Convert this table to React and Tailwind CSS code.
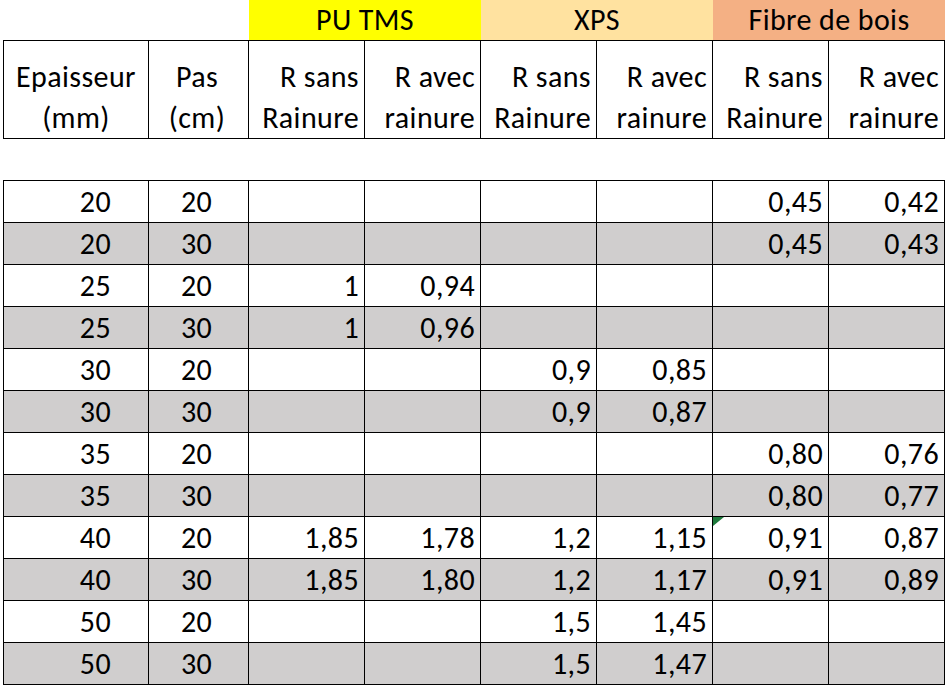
import React from "react";

const rows = [
  ["20", "20", "", "", "", "", "0,45", "0,42"],
  ["20", "30", "", "", "", "", "0,45", "0,43"],
  ["25", "20", "1", "0,94", "", "", "", ""],
  ["25", "30", "1", "0,96", "", "", "", ""],
  ["30", "20", "", "", "0,9", "0,85", "", ""],
  ["30", "30", "", "", "0,9", "0,87", "", ""],
  ["35", "20", "", "", "", "", "0,80", "0,76"],
  ["35", "30", "", "", "", "", "0,80", "0,77"],
  ["40", "20", "1,85", "1,78", "1,2", "1,15", "0,91", "0,87"],
  ["40", "30", "1,85", "1,80", "1,2", "1,17", "0,91", "0,89"],
  ["50", "20", "", "", "1,5", "1,45", "", ""],
  ["50", "30", "", "", "1,5", "1,47", "", ""],
];

const cols = "grid grid-cols-[145px_100px_116px_116px_116px_116px_116px_116px]";

const heads = [
  ["R sans", "Rainure"],
  ["R avec", "rainure"],
  ["R sans", "Rainure"],
  ["R avec", "rainure"],
  ["R sans", "Rainure"],
  ["R avec", "rainure"],
];

export default function App() {
  return (
    <div
      className="w-[949px] h-[685px] bg-white text-black overflow-hidden text-[30px] tracking-[0.4px]"
      style={{ fontFamily: "Carlito, Lato, 'Open Sans', sans-serif" }}
    >
      <div className="ml-[3px] w-[942px]">
        {/* group header */}
        <div className={`${cols} h-[40px] pl-[1px]`}>
          <div className="col-span-2" />
          <div className="col-span-2 bg-[#ffff00] flex items-center justify-center leading-none">PU TMS</div>
          <div className="col-span-2 bg-[#ffe2a0] flex items-center justify-center leading-none">XPS</div>
          <div className="col-span-2 bg-[#f4b084] flex items-center justify-center leading-none">Fibre de bois</div>
        </div>
        {/* column header */}
        <div className={`${cols} border-l border-t border-black`}>
          <div className="h-[98px] border-r border-b border-black flex flex-col justify-end items-center leading-[41px]">
            <span>Epaisseur</span>
            <span>(mm)</span>
          </div>
          <div className="h-[98px] border-r border-b border-black flex flex-col justify-end items-center leading-[41px] pr-[3px]">
            <span>Pas</span>
            <span>(cm)</span>
          </div>
          {heads.map((h, i) => (
            <div
              key={i}
              className="h-[98px] border-r border-b border-black flex flex-col justify-end items-end pr-[5px] leading-[41px]"
            >
              <span>{h[0]}</span>
              <span>{h[1]}</span>
            </div>
          ))}
        </div>
        <div className="h-[41px]" />
        {/* data */}
        <div className="border-l border-t border-black">
          {rows.map((r, ri) => (
            <div key={ri} className={`${cols} ${ri % 2 === 1 ? "bg-[#d0cece]" : "bg-white"}`}>
              {r.map((v, ci) => (
                <div
                  key={ci}
                  className={`relative h-[42px] border-r border-b border-black flex items-center leading-none ${
                    ci === 0 ? "justify-end pr-[37px]" : ci === 1 ? "justify-center pr-[4px]" : "justify-end pr-[5px]"
                  }`}
                >
                  {ri === 8 && ci === 6 && (
                    <svg className="absolute left-0 top-0" width="11" height="9" viewBox="0 0 11 9">
                      <polygon points="0,0 11,0 0,9" fill="#1e7a3c" />
                    </svg>
                  )}
                  {v}
                </div>
              ))}
            </div>
          ))}
        </div>
      </div>
    </div>
  );
}
